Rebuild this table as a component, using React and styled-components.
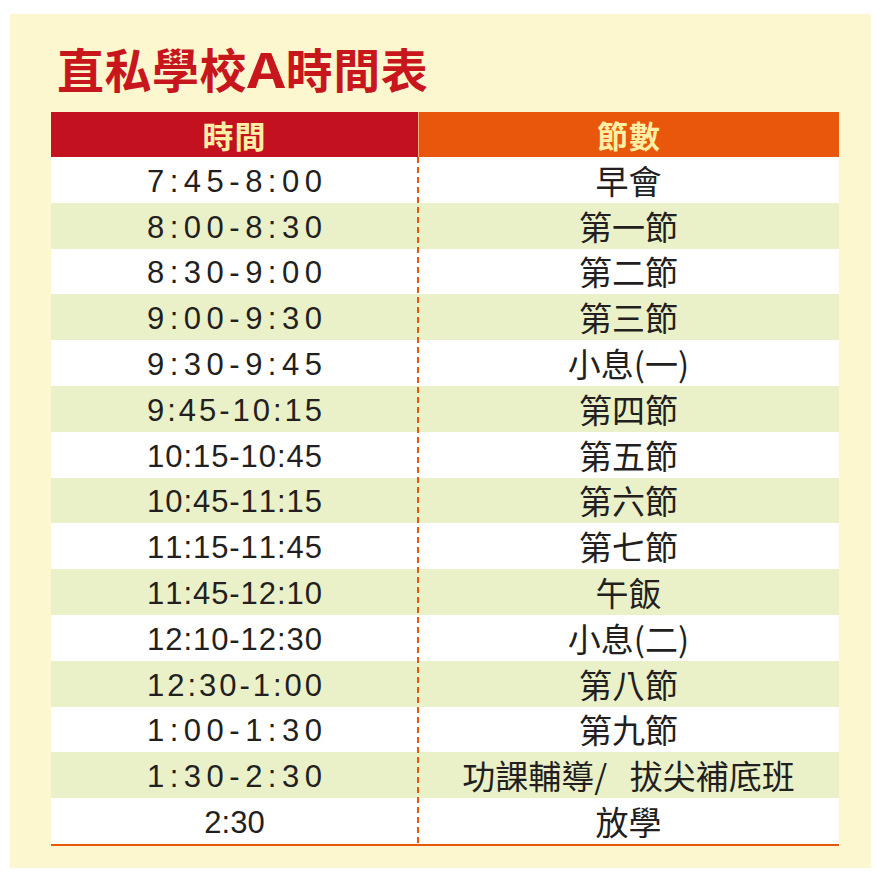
import React from "react";
import styled, { createGlobalStyle } from "styled-components";

const Global = createGlobalStyle`
  html, body { margin: 0; padding: 0; background: #ffffff; }
  #root { width: 884px; height: 884px; }
`;

const Page = styled.div`
  width: 884px;
  height: 884px;
  padding: 14px 0 0 10px;
  box-sizing: border-box;
`;

const Panel = styled.div`
  width: 861px;
  height: 854px;
  background: #fdf7d0;
  box-sizing: border-box;
  padding: 30px 32px 0 41px;
  display: flex;
  flex-direction: column;
`;

const Title = styled.h1`
  margin: 0 0 21px 6px;
  font-family: "Noto Sans CJK TC", "Noto Sans", sans-serif;
  font-weight: 700;
  font-size: 47px;
  line-height: 47px;
  height: 47px;
  letter-spacing: 0.5px;
  color: #c8161d;
`;

const Wide = styled.span`
  display: inline-block;
  transform: scaleX(1.25);
  margin: 0 4px;
`;

const Table = styled.div`
  width: 788px;
  display: flex;
  flex-direction: column;
`;

const Header = styled.div`
  display: grid;
  grid-template-columns: 367px 421px;
  height: 45px;
`;

const HeadCell = styled.div`
  background: ${(p) => p.$bg};
  border-left: ${(p) => (p.$divider ? "1px solid #f6b07a" : "none")};
  display: flex;
  align-items: center;
  justify-content: center;
  font-family: "Noto Sans CJK TC", sans-serif;
  font-weight: 700;
  font-size: 31px;
  color: #fdf0a6;
  letter-spacing: 1px;
`;

const Body = styled.div`
  position: relative;
  display: grid;
  grid-template-rows: repeat(15, 1fr);
  height: 687px;
  border-bottom: 2px solid #e8570c;
  &::after {
    content: "";
    position: absolute;
    left: 366px;
    top: 0;
    bottom: 0;
    width: 2px;
    background: repeating-linear-gradient(
      to bottom,
      #e8570c 0 6px,
      transparent 6px 10px
    );
  }
`;

const Row = styled.div`
  display: grid;
  grid-template-columns: 367px 421px;
  background: ${(p) => (p.$alt ? "#eaf1c8" : "#ffffff")};
`;

const TimeCell = styled.div`
  display: flex;
  align-items: center;
  justify-content: center;
  padding-top: 3px;
`;

const TimeText = styled.div`
  display: flex;
  justify-content: space-between;
  width: ${(p) => (p.$spread ? "175px" : "auto")};
  font-family: "Liberation Sans", Arial, sans-serif;
  font-size: 31px;
  color: #231f20;
  line-height: 1;
`;

const NameCell = styled.div`
  display: flex;
  align-items: center;
  justify-content: center;
  padding-top: 1px;
  font-family: "Noto Sans CJK TC", sans-serif;
  font-size: 33px;
  color: #231f20;
  word-spacing: 15px;
  line-height: 1;
`;

const rows = [
  ["7:45-8:00", "早會"],
  ["8:00-8:30", "第一節"],
  ["8:30-9:00", "第二節"],
  ["9:00-9:30", "第三節"],
  ["9:30-9:45", "小息(一)"],
  ["9:45-10:15", "第四節"],
  ["10:15-10:45", "第五節"],
  ["10:45-11:15", "第六節"],
  ["11:15-11:45", "第七節"],
  ["11:45-12:10", "午飯"],
  ["12:10-12:30", "小息(二)"],
  ["12:30-1:00", "第八節"],
  ["1:00-1:30", "第九節"],
  ["1:30-2:30", "功課輔導/ 拔尖補底班"],
  ["2:30", "放學"],
];

export default function App() {
  return (
    <>
      <Global />
      <Page>
        <Panel>
          <Title>
            直私學校<Wide>A</Wide>時間表
          </Title>
          <Table>
            <Header>
              <HeadCell $bg="#c3111f">時間</HeadCell>
              <HeadCell $bg="#e8570c" $divider>節數</HeadCell>
            </Header>
            <Body>
              {rows.map(([t, n], i) => {
                const spread = t.length > 4;
                return (
                  <Row key={i} $alt={i % 2 === 1}>
                    <TimeCell>
                      <TimeText $spread={spread}>
                        {spread
                          ? t.split("").map((c, j) => <span key={j}>{c}</span>)
                          : t}
                      </TimeText>
                    </TimeCell>
                    <NameCell>{n}</NameCell>
                  </Row>
                );
              })}
            </Body>
          </Table>
        </Panel>
      </Page>
    </>
  );
}
